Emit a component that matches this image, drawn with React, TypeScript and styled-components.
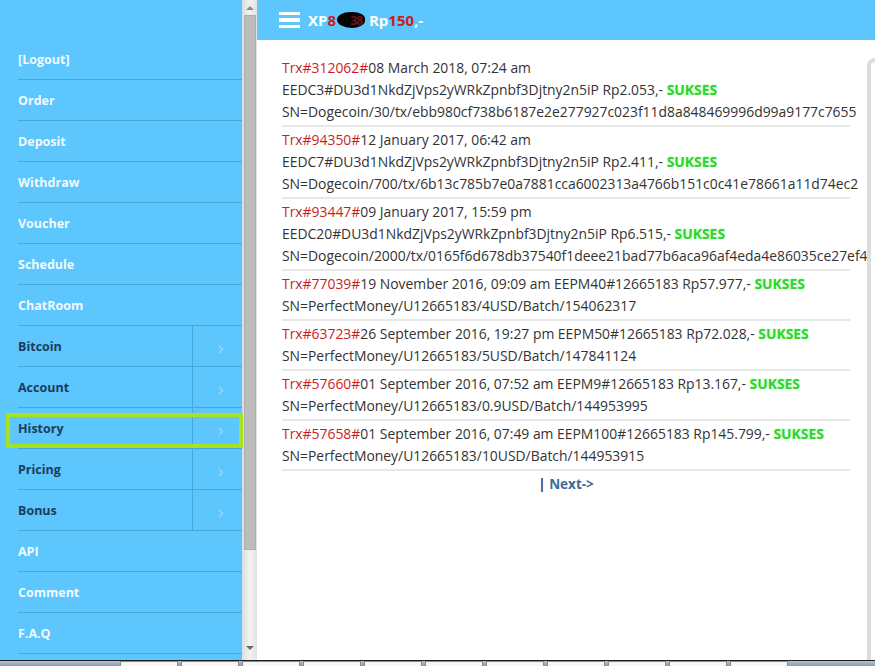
import styled, { createGlobalStyle } from 'styled-components';

const GlobalStyle = createGlobalStyle`
  html, body {
    margin: 0;
    padding: 0;
  }
  body {
    font-family: 'Open Sans', 'Liberation Sans', sans-serif;
    background: #ffffff;
    overflow: hidden;
  }
`;

type MenuEntry = { label: string; sub?: boolean; active?: boolean };

const menu: MenuEntry[] = [
  { label: '[Logout]' },
  { label: 'Order' },
  { label: 'Deposit' },
  { label: 'Withdraw' },
  { label: 'Voucher' },
  { label: 'Schedule' },
  { label: 'ChatRoom' },
  { label: 'Bitcoin', sub: true },
  { label: 'Account', sub: true },
  { label: 'History', sub: true, active: true },
  { label: 'Pricing', sub: true },
  { label: 'Bonus', sub: true },
  { label: 'API' },
  { label: 'Comment' },
  { label: 'F.A.Q' }
];

type Trx = {
  id: string;
  date: string;
  detail: string;
  amount: string;
  sn: string;
  inline?: boolean;
};

const history: Trx[] = [
  {
    id: '312062',
    date: '08 March 2018, 07:24 am',
    detail: 'EEDC3#DU3d1NkdZjVps2yWRkZpnbf3Djtny2n5iP',
    amount: 'Rp2.053,-',
    sn: 'SN=Dogecoin/30/tx/ebb980cf738b6187e2e277927c023f11d8a848469996d99a9177c7655'
  },
  {
    id: '94350',
    date: '12 January 2017, 06:42 am',
    detail: 'EEDC7#DU3d1NkdZjVps2yWRkZpnbf3Djtny2n5iP',
    amount: 'Rp2.411,-',
    sn: 'SN=Dogecoin/700/tx/6b13c785b7e0a7881cca6002313a4766b151c0c41e78661a11d74ec2'
  },
  {
    id: '93447',
    date: '09 January 2017, 15:59 pm',
    detail: 'EEDC20#DU3d1NkdZjVps2yWRkZpnbf3Djtny2n5iP',
    amount: 'Rp6.515,-',
    sn: 'SN=Dogecoin/2000/tx/0165f6d678db37540f1deee21bad77b6aca96af4eda4e86035ce27ef4'
  },
  {
    id: '77039',
    date: '19 November 2016, 09:09 am',
    detail: 'EEPM40#12665183',
    amount: 'Rp57.977,-',
    sn: 'SN=PerfectMoney/U12665183/4USD/Batch/154062317',
    inline: true
  },
  {
    id: '63723',
    date: '26 September 2016, 19:27 pm',
    detail: 'EEPM50#12665183',
    amount: 'Rp72.028,-',
    sn: 'SN=PerfectMoney/U12665183/5USD/Batch/147841124',
    inline: true
  },
  {
    id: '57660',
    date: '01 September 2016, 07:52 am',
    detail: 'EEPM9#12665183',
    amount: 'Rp13.167,-',
    sn: 'SN=PerfectMoney/U12665183/0.9USD/Batch/144953995',
    inline: true
  },
  {
    id: '57658',
    date: '01 September 2016, 07:49 am',
    detail: 'EEPM100#12665183',
    amount: 'Rp145.799,-',
    sn: 'SN=PerfectMoney/U12665183/10USD/Batch/144953915',
    inline: true
  }
];

const Chevron = () => (
  <svg width="6" height="9" viewBox="0 0 6 9">
    <path d="M1 1 L4.5 4.5 L1 8" fill="none" stroke="#9ed8f7" strokeWidth="1.3" />
  </svg>
);

const App = () => {
  return (
    <>
      <GlobalStyle />
      <Page>
        <Screen>
          <Sidebar>
            <Menu>
              {menu.map((m) => (
                <MenuItem key={m.label} $active={m.active}>
                  <MenuLabel $sub={m.sub}>{m.label}</MenuLabel>
                  {m.sub && (
                    <ArrowCell>
                      <Chevron />
                    </ArrowCell>
                  )}
                </MenuItem>
              ))}
            </Menu>
          </Sidebar>

          <ScrollBar>
            <ScrollArrow $up />
            <ScrollThumb />
            <ScrollArrow />
          </ScrollBar>

          <Main>
            <Header>
              <Burger>
                <span />
                <span />
                <span />
              </Burger>
              <Balance>
                XP<Red>8</Red>
                <Blob>
                  <BlobText>38</BlobText>
                </Blob>
                &nbsp;Rp<Red>150</Red>,-
              </Balance>
            </Header>

            <Content>
              <List>
                {history.map((t) => (
                  <Row key={t.id}>
                    <Line>
                      <Red>Trx#{t.id}#</Red>
                      {t.date}
                      {t.inline && (
                        <>
                          {' '}
                          {t.detail} {t.amount} <Status>SUKSES</Status>
                        </>
                      )}
                    </Line>
                    {!t.inline && (
                      <Line>
                        {t.detail} {t.amount} <Status>SUKSES</Status>
                      </Line>
                    )}
                    <Line>{t.sn}</Line>
                  </Row>
                ))}
                <Pager>
                  | <NextLink>Next-&gt;</NextLink>
                </Pager>
              </List>
              <SidePanel />
            </Content>
          </Main>
        </Screen>
        <Taskbar>
          {Array.from({ length: 11 }).map((_, i) => (
            <TaskButton key={i} />
          ))}
        </Taskbar>
      </Page>
    </>
  );
};

export default App;

const blue = '#5cc6fd';
const divider = '#48a6df';

const Page = styled.div`
  width: 875px;
  height: 666px;
  display: flex;
  flex-direction: column;
  overflow: hidden;
`;

const Screen = styled.div`
  flex: 1;
  display: flex;
  min-height: 0;
`;

const Sidebar = styled.nav`
  width: 242px;
  flex-shrink: 0;
  background: ${blue};
  padding-top: 39px;
  box-sizing: border-box;
`;

const Menu = styled.ul`
  list-style: none;
  margin: 0 0 0 18px;
  padding: 0;
`;

const MenuItem = styled.li<{ $active?: boolean }>`
  position: relative;
  height: 40px;
  display: flex;
  align-items: stretch;
  border-bottom: 1px solid ${divider};

  ${(p) =>
    p.$active &&
    `
    &::after {
      content: '';
      position: absolute;
      top: 5px;
      bottom: 0;
      left: -12px;
      right: -1px;
      border: 4px solid #a8e11f;
      pointer-events: none;
    }
  `}
`;

const MenuLabel = styled.span<{ $sub?: boolean }>`
  flex: 1;
  display: flex;
  align-items: center;
  font-size: 12.5px;
  font-weight: 700;
  color: ${(p) => (p.$sub ? '#1b3d5b' : '#f2faff')};
`;

const ArrowCell = styled.span`
  width: 50px;
  border-left: 1px solid ${divider};
  display: flex;
  align-items: center;
  justify-content: center;
  padding: 6px 0 0 6px;
  box-sizing: border-box;
`;

const ScrollBar = styled.div`
  width: 15px;
  flex-shrink: 0;
  display: flex;
  flex-direction: column;
  align-items: center;
  background: linear-gradient(to right, #dcdcdc, #f2f2f2 50%, #e2e2e2);
`;

const ScrollArrow = styled.div<{ $up?: boolean }>`
  width: 0;
  height: 0;
  margin: ${(p) => (p.$up ? '6px 0 5px' : '4px 0 10px')};
  border-left: 4px solid transparent;
  border-right: 4px solid transparent;
  ${(p) => (p.$up ? 'border-bottom: 4px solid #8a8a8a;' : 'border-top: 4px solid #6a6a6a;')}
`;

const ScrollThumb = styled.div`
  width: 12px;
  height: 535px;
  background: #bcbcbc;
  border: 1px solid #b0b0b0;
  box-sizing: border-box;
  flex-shrink: 0;
  margin-bottom: auto;
`;

const Main = styled.main`
  flex: 1;
  display: flex;
  flex-direction: column;
  min-width: 0;
`;

const Header = styled.header`
  height: 40px;
  flex-shrink: 0;
  background: ${blue};
  display: flex;
  align-items: center;
  padding-left: 22px;
`;

const Burger = styled.div`
  width: 21px;
  display: flex;
  flex-direction: column;
  gap: 3px;
  margin-right: 8px;

  span {
    display: block;
    height: 3.5px;
    background: #ffffff;
  }
`;

const Balance = styled.div`
  font-size: 15px;
  font-weight: 700;
  color: #ffffff;
  display: flex;
  align-items: center;
  white-space: nowrap;
`;

const Red = styled.span`
  color: #cc1d1d;
`;

const Blob = styled.span`
  display: inline-flex;
  align-items: center;
  justify-content: flex-end;
  width: 28px;
  height: 16px;
  margin-left: 1px;
  background: #050505;
  border-radius: 50% 45% 50% 55%;
  overflow: hidden;
  box-sizing: border-box;
  padding-right: 3px;
`;

const BlobText = styled.span`
  color: #6e1217;
  font-size: 12px;
  letter-spacing: -1px;
`;

const Content = styled.section`
  flex: 1;
  display: flex;
  align-items: flex-start;
  overflow: hidden;
  padding: 15px 0 0 25px;
  background: #ffffff;
`;

const List = styled.div`
  width: 568px;
  flex-shrink: 0;
  min-width: 0;
`;

const Row = styled.div`
  padding: 2px 0;
  border-bottom: 2px solid #e8e8e8;
`;

const Line = styled.div`
  font-size: 13.9px;
  line-height: 22px;
  color: #333333;
  white-space: nowrap;
`;

const Status = styled.span`
  color: #2ed52e;
  font-weight: 700;
  text-shadow: 0 0 2px rgba(80, 255, 80, 0.5);
`;

const Pager = styled.div`
  text-align: center;
  font-size: 13.5px;
  font-weight: 700;
  line-height: 22px;
  color: #333333;
  padding-top: 2px;
`;

const NextLink = styled.span`
  color: #3a6c98;
`;

const SidePanel = styled.aside`
  position: relative;
  flex: 1;
  align-self: stretch;
  margin: 3px 0 0 17px;
  background: #ffffff;
  border-left: 4px solid #dcdcdc;
  border-top: 4px solid #dcdcdc;
  border-top-left-radius: 10px;
`;

const Taskbar = styled.footer`
  height: 5px;
  flex-shrink: 0;
  display: flex;
  gap: 3px;
  padding-left: 120px;
  border-top: 1px solid #1c1c1c;
  background: linear-gradient(to bottom, #b5c1cf, #8c9bb0);
`;

const TaskButton = styled.div`
  width: 58px;
  background: #f6f6f6;
  border: 1px solid #8a8a8a;
  border-bottom: none;
  box-sizing: border-box;
`;
